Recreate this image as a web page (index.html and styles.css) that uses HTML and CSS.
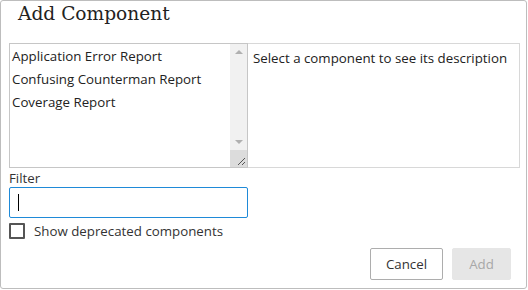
FILE: index.html
```html
<!DOCTYPE html>
<html lang="en">
<head>
    <meta charset="UTF-8">
    <title>Add Component</title>
    <link rel="stylesheet" href="styles.css">
</head>
<body>
    <div class="dialog">
        <h1 class="title">Add Component</h1>

        <div class="panes">
            <div class="list">
                <ul class="items">
                    <li>Application Error Report</li>
                    <li>Confusing Counterman Report</li>
                    <li>Coverage Report</li>
                </ul>
                <div class="scrollbar">
                    <span class="arrow up"></span>
                    <span class="track"></span>
                    <span class="arrow down"></span>
                    <span class="grip">
                        <svg width="17" height="17" viewBox="0 0 17 17">
                            <path d="M8 15 L15 8 M12 15 L15 12" stroke="#555" stroke-width="1" fill="none"/>
                        </svg>
                    </span>
                </div>
            </div>
            <div class="description">Select a component to see its description</div>
        </div>

        <label class="filter-label" for="filter">Filter</label>
        <div class="filter-box">
            <input type="text" id="filter" class="filter">
            <span class="caret"></span>
        </div>

        <label class="check">
            <span class="box"></span>
            Show deprecated components
        </label>

        <div class="actions">
            <button class="btn">Cancel</button>
            <button class="btn disabled">Add</button>
        </div>
    </div>
</body>
</html>
```

FILE: styles.css
```css
html, body {
    margin: 0;
    padding: 0;
    background: #fff;
}
body {
    font-family: "Open Sans", "Noto Sans", sans-serif;
    font-size: 13.3px;
    color: #222;
}
.dialog {
    width: 525px;
    height: 287px;
    border: 1px solid #bdbdbd;
    border-radius: 3px;
    background: #fff;
    position: relative;
}
.title {
    margin: 0;
    padding: 0 0 0 17px;
    height: 41px;
    box-sizing: border-box;
    font-family: "DejaVu Serif", "Liberation Serif", serif;
    font-weight: normal;
    font-size: 18.6px;
    line-height: 26px;
    color: #222;
}
.panes {
    display: flex;
    margin: 1px 0 0 8px;
    height: 125px;
}
.list {
    width: 237px;
    border: 1px solid #c6c6c6;
    display: flex;
}
.items {
    list-style: none;
    margin: 0;
    padding: 1px 0 0 2px;
    flex: 1;
}
.items li {
    height: 23px;
    line-height: 22px;
    white-space: nowrap;
}
.scrollbar {
    width: 17px;
    background: #f1f1f1;
    display: flex;
    flex-direction: column;
}
.arrow {
    height: 17px;
    position: relative;
}
.arrow::after {
    content: "";
    position: absolute;
    left: 5px;
    border-left: 4px solid transparent;
    border-right: 4px solid transparent;
}
.arrow.up::after {
    top: 6px;
    border-bottom: 4px solid #b0b0b0;
}
.arrow.down::after {
    top: 7px;
    border-top: 4px solid #b0b0b0;
}
.track {
    flex: 1;
}
.grip {
    height: 17px;
    background: #dcdcdc;
    display: block;
}
.grip svg {
    display: block;
}
.description {
    width: 272px;
    border: 1px solid #d8d8d8;
    border-left: none;
    padding: 5px 0 0 5px;
    box-sizing: border-box;
    height: 125px;
    white-space: nowrap;
}
.filter-label {
    display: block;
    margin: 2px 0 0 8px;
    line-height: 17px;
    color: #333;
}
.filter-box {
    position: relative;
    margin: 0 0 0 8px;
    width: 239px;
    height: 31px;
    box-sizing: border-box;
    border: 1px solid #1f8ad8;
    border-radius: 2px;
}
.filter {
    display: block;
    width: 100%;
    height: 100%;
    box-sizing: border-box;
    border: none;
    outline: none;
    padding: 0 8px;
    font: inherit;
    background: transparent;
}
.caret {
    position: absolute;
    left: 8px;
    top: 6px;
    width: 1px;
    height: 17px;
    background: #000;
}
.check {
    display: flex;
    align-items: center;
    margin: 3px 0 0 8px;
    height: 20px;
    color: #333;
}
.box {
    width: 12px;
    height: 12px;
    border: 2px solid #555;
    border-radius: 1px;
    margin-right: 9px;
}
.actions {
    display: flex;
    justify-content: flex-end;
    gap: 9px;
    margin: 7px 15px 0 0;
}
.btn {
    height: 32px;
    font: inherit;
    border-radius: 2px;
    background: #fff;
    border: 1px solid #adadad;
    color: #333;
    padding: 0;
    width: 73px;
}
.btn.disabled {
    width: 59px;
    background: #e6e6e6;
    border-color: #e6e6e6;
    color: #a8a8a8;
}
```
